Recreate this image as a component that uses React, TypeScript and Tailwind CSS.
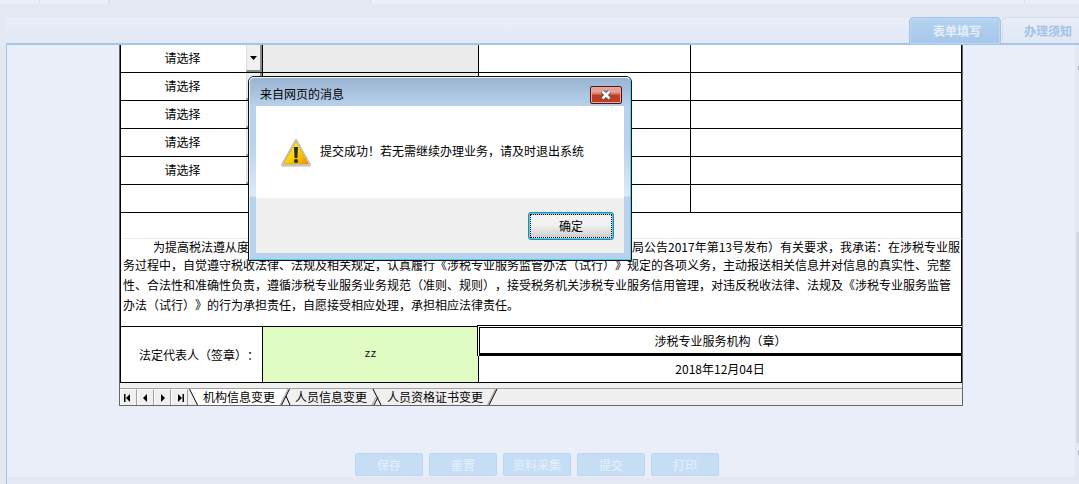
import { useState } from "react";

const SELECT_ROWS = [0, 1, 2, 3, 4];
const ACTIONS = ["保存", "重置", "资料采集", "提交", "打印"];

const CELL = "border-r border-b border-black p-0";

function TopStrip() {
  return (
    <div className="flex h-1 shrink-0">
      <div className="w-10 border-r border-[#dadfeb] bg-[#e9eef8]" />
      <div className="w-[69px] border-r border-[#dadfeb] bg-[#e9eef8]" />
      <div className="w-[261px]" />
      <div className="flex-1 border-x border-[#dadfeb] bg-[#e9eef8]" />
      <div className="w-[54px] bg-[#e9eef8]" />
    </div>
  );
}

function PageTabs() {
  return (
    <nav className="mt-[13px] ml-1.5 flex h-7 shrink-0 justify-end border-b-2 border-[#a5c5e9] bg-linear-to-b from-[#e9edf8] to-[#e1e9f4]">
      <button className="h-7 w-[92px] rounded-t border border-[#a2c4e6] bg-linear-to-b from-[#b5d4f0] to-[#a6c5e9] pl-1 text-xs font-bold text-[#e6effa] shadow-[inset_0_0_0_1px_#bcd8f2]">
        表单填写
      </button>
      <button className="ml-px w-[77px] rounded-tl border-t border-l border-[#d6ddeb] bg-linear-to-b from-[#e8edf8] to-[#e0e8f5] pl-[21px] text-left text-xs font-bold whitespace-nowrap text-[#a3c2e7]">
        办理须知
      </button>
    </nav>
  );
}

function CellSelect({ index }: { index: number }) {
  return (
    <div className="flex h-[27px]">
      <select
        aria-label={`第${index + 1}行`}
        className="min-w-0 flex-1 appearance-none bg-white pr-0.5 pb-0.5 text-center text-xs outline-none"
      >
        <option>请选择</option>
      </select>
      <span className="flex w-4 items-center justify-center border-r-2 border-b-2 border-l border-r-[#8a8a8a] border-b-[#8a8a8a] border-l-[#dcdcdc] bg-[#f0f0f0]">
        <svg width="7" height="4" viewBox="0 0 7 4">
          <path d="M0 0h7L3.5 4z" fill="#000" />
        </svg>
      </span>
    </div>
  );
}

function Pledge() {
  return (
    <div className="pr-px pl-0.5 text-xs whitespace-nowrap">
      <p className="flex justify-between pl-[30px] leading-4">
        <span>为提高税法遵从度</span>
        <span>局公告2017年第13号发布）有关要求，我承诺：在涉税专业服</span>
      </p>
      <p className="leading-5">
        务过程中，自觉遵守税收法律、法规及相关规定，认真履行《涉税专业服务监管办法（试行）》规定的各项义务，主动报送相关信息并对信息的真实性、完整
        <br />
        性、合法性和准确性负责，遵循涉税专业服务业务规范（准则、规则），接受税务机关涉税专业服务信用管理，对违反税收法律、法规及《涉税专业服务监管
        <br />
        办法（试行）》的行为承担责任，自愿接受相应处理，承担相应法律责任。
      </p>
    </div>
  );
}

function NavButton({ label, d }: { label: string; d: string }) {
  return (
    <button
      aria-label={label}
      className="flex h-4 w-[17px] items-center justify-center border-t border-r border-l border-t-white border-r-[#a0a0a0] border-l-white bg-[#f0f0f0]"
    >
      <svg width="9" height="8" viewBox="0 0 9 8">
        <path d={d} fill="#000" />
      </svg>
    </button>
  );
}

function SheetTabs() {
  return (
    <div className="flex h-[17px] border-t border-[#a0a0a0] bg-[#f0f0f0] text-xs leading-4 whitespace-nowrap">
      <NavButton label="首页" d="M0 0h1.500v8H0zM6 0v8L2 4z" />
      <NavButton label="上一页" d="M6 0v8L2 4z" />
      <NavButton label="下一页" d="M3 0v8l4-4z" />
      <NavButton label="末页" d="M3 0v8l4-4zM7.500 0H9v8H7.500z" />
      <svg width="15" height="16" viewBox="0 0 15 16">
        <path d="M1 0h14v16H9z" fill="#fff" />
        <path d="M1.500 0L9.500 16" stroke="#000" />
      </svg>
      <button className="bg-white">机构信息变更</button>
      <svg width="20" height="16" viewBox="0 0 20 16">
        <path d="M0 0h14L6 16H0z" fill="#fff" />
        <path d="M13 0L5 16" stroke="#a0a0a0" />
        <path d="M14.500 0L6.500 16M11 7l4 9" stroke="#000" />
      </svg>
      <button>人员信息变更</button>
      <svg width="20" height="16" viewBox="0 0 20 16">
        <path d="M9 8l-4 8" stroke="#a0a0a0" />
        <path d="M6 0l8 16M11 8L7 16" stroke="#000" />
      </svg>
      <button>人员资格证书变更</button>
      <svg width="15" height="16" viewBox="0 0 15 16">
        <path d="M12.500 0l-8 16" stroke="#a0a0a0" />
        <path d="M14 0L6 16" stroke="#000" />
      </svg>
    </div>
  );
}

function Sheet() {
  return (
    <div className="mx-auto w-full max-w-[844px] border-r border-b border-l border-[#666] bg-[#f0f0f0]">
      <table className="w-full table-fixed border-separate border-spacing-0 border-l border-black bg-white text-xs text-black">
        <colgroup>
          <col className="w-[142px]" />
          <col className="w-[216px]" />
          <col className="w-[212px]" />
          <col />
        </colgroup>
        <tbody>
          {SELECT_ROWS.map((row) => (
            <tr key={row} className="h-7">
              <td className={CELL}>
                <CellSelect index={row} />
              </td>
              <td className={`${CELL} bg-[#ebebeb]`} />
              <td className={CELL} />
              <td className={CELL} />
            </tr>
          ))}
          <tr className="h-7">
            <td className={CELL} />
            <td className={CELL} />
            <td className={CELL} />
            <td className={CELL} />
          </tr>
          <tr className="h-[26px]">
            <td
              colSpan={4}
              className="border-r border-b border-r-black border-b-[#ececec] p-0"
            />
          </tr>
          <tr className="h-[88px]">
            <td colSpan={4} className={`${CELL} align-top`}>
              <Pledge />
            </td>
          </tr>
          <tr className="h-7">
            <td rowSpan={2} className="border-r border-b border-black p-0 pl-[18px] whitespace-nowrap">
              法定代表人（签章）：
            </td>
            <td
              rowSpan={2}
              className={`${CELL} bg-[#e0fcc3] text-center font-['Liberation_Mono',monospace] text-[10px]`}
            >
              zz
            </td>
            <td colSpan={2} className="relative p-0 text-center">
              {/* selected cell frame */}
              <div className="absolute -top-0.5 right-0 -bottom-px -left-0.5 border-t border-l border-black bg-white pt-px pl-px">
                <div className="flex h-full items-center justify-center border border-b-[3px] border-black">
                  涉税专业服务机构（章）
                </div>
              </div>
            </td>
          </tr>
          <tr className="h-7">
            <td colSpan={2} className={`${CELL} text-center`}>
              2018年12月04日
            </td>
          </tr>
        </tbody>
      </table>
      <div className="h-[5px]" />
      <SheetTabs />
    </div>
  );
}

function ScrollBar() {
  return (
    <div className="flex w-1 shrink-0 flex-col items-end bg-[#e3e7f1]">
      <div className="mt-[21px] h-1 w-px bg-[#b0b4c0]" />
      <div className="mt-[162px] h-[211px] w-[3px] bg-[#d5d9e3]" />
      <div className="mt-2 h-1 w-px bg-[#b0b4c0]" />
    </div>
  );
}

function WarningIcon() {
  return (
    <svg width="32" height="30" viewBox="0 0 32 30" className="shrink-0">
      <defs>
        <linearGradient id="warn" x1="0" y1="0" x2="1" y2="1">
          <stop offset="0.2" stopColor="#fff04a" />
          <stop offset="0.55" stopColor="#fbd000" />
          <stop offset="1" stopColor="#ee8f00" />
        </linearGradient>
      </defs>
      <path
        d="M16 2L30.500 27.500a1 1 0 0 1-1 1.500h-27a1 1 0 0 1-1-1.500z"
        fill="#d4d6d9"
        stroke="#a4a7ab"
        strokeWidth="0.8"
        strokeLinejoin="round"
      />
      <path d="M16 4.500L28.500 27H3.500z" fill="url(#warn)" stroke="#d99b00" strokeWidth="0.7" />
      <path d="M14 10h4l-.6 11h-2.800z" fill="#222b3a" />
      <circle cx="16" cy="24" r="2" fill="#222b3a" />
    </svg>
  );
}

function MessageDialog({ onClose }: { onClose: () => void }) {
  return (
    <div
      role="dialog"
      aria-labelledby="dialog-title"
      className="absolute top-[76px] left-[248px] w-96 rounded-t-md border border-[#111] bg-[#b9d1ea] text-xs text-black"
    >
      <div className="rounded-t-[5px] border border-t-[#f2f7fc] border-r-[#43d3f0] border-b-[#43d3f0] border-l-[#e6f0fa] bg-linear-to-b from-[#b9d1ea] from-35% via-[#dce9f6] via-65% to-[#b9d1ea] to-66%">
        <div className="flex h-7 items-start justify-between rounded-t-[5px] bg-linear-to-b from-[#99b4d1] to-[#b8d0ea] pr-2 pl-2.5">
          <h2 id="dialog-title" className="pt-1 leading-6">
            来自网页的消息
          </h2>
          <button
            aria-label="关闭"
            onClick={onClose}
            className="mt-2 flex h-[18px] w-8 items-center justify-center rounded-xs border border-[#4c1418] bg-linear-to-b from-[#e5a195] from-30% via-[#d5705a] via-45% to-[#bb3e25] to-50% shadow-[inset_0_0_0_1px_#e6aaa0]"
          >
            <svg width="12" height="10" viewBox="0 0 12 10">
              <path d="M2.500 1.500l7 7M9.500 1.500l-7 7" stroke="#4b4e5e" strokeWidth="4.500" />
              <path d="M2.500 1.500l7 7M9.500 1.500l-7 7" stroke="#fff" strokeWidth="2.500" />
            </svg>
          </button>
        </div>
        <div className="mx-1.5 mb-1.5">
          <div className="flex h-[92px] items-center gap-2 bg-white pl-6">
            <WarningIcon />
            <p className="pb-0.5">提交成功！若无需继续办理业务，请及时退出系统</p>
          </div>
          <div className="flex h-[55px] items-center justify-end bg-[#f0f0f0] pr-2.5">
            <button
              onClick={onClose}
              className="h-7 w-[86px] rounded-[3px] border border-[#3c7fb1] bg-[#43d3f0] p-px"
            >
              <span className="flex h-full items-center justify-center border border-dotted border-black bg-linear-to-b from-[#f2f2f2] from-45% to-[#cfcfcf]">
                确定
              </span>
            </button>
          </div>
        </div>
      </div>
    </div>
  );
}

export default function App() {
  const [open, setOpen] = useState(true);

  return (
    <div className="relative flex min-h-screen flex-col overflow-hidden bg-[#e4e8f3] font-['Noto_Sans_CJK_SC',sans-serif] [text-spacing-trim:space-all]">
      <TopStrip />
      <PageTabs />
      <div className="ml-1.5 flex-1 border-l border-[#a5c5e9]">
        <div className="flex">
          <main className="min-w-0 flex-1 bg-[#e9eef8] pb-px">
            <Sheet />
            <div className="mt-[47px] flex justify-center gap-1.5 pr-2">
              {ACTIONS.map((name) => (
                <button
                  key={name}
                  className="h-[23px] w-[68px] rounded-xs border border-[#bdd5ed] bg-[#c6def5] text-xs text-[#e6f1f9]"
                >
                  {name}
                </button>
              ))}
            </div>
          </main>
          <ScrollBar />
        </div>
      </div>
      {open && <MessageDialog onClose={() => setOpen(false)} />}
    </div>
  );
}
